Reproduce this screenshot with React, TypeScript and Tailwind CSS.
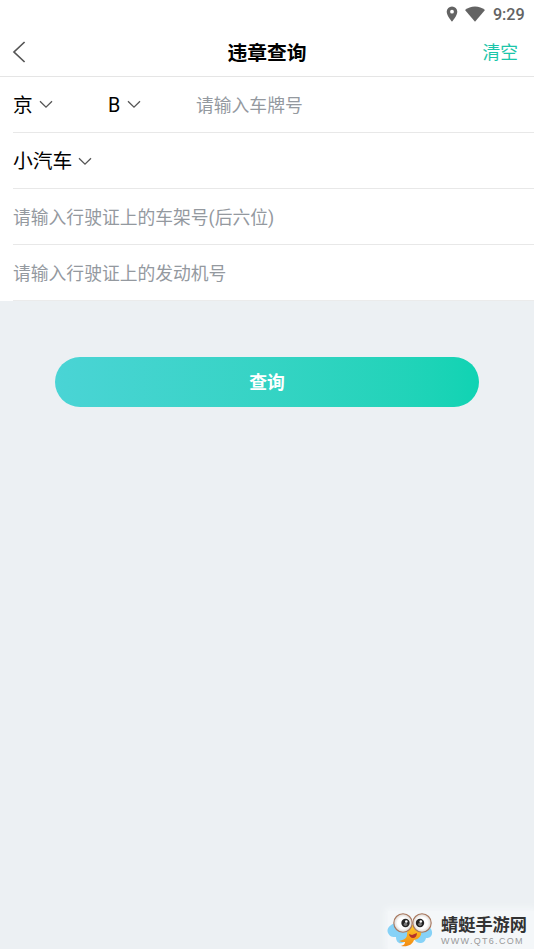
type ArrowProps = { className?: string }

function DownArrow({ className = "" }: ArrowProps) {
  return (
    <svg viewBox="0 0 14 9" className={`mb-0.5 w-3.5 h-[9px] shrink-0 ${className}`} fill="none" stroke="#555" strokeWidth="1.3">
      <path d="M1 1.2 7 7.2 13 1.2" />
    </svg>
  )
}

function StatusBar() {
  return (
    <div className="flex h-7 items-center justify-end pr-[9.5px] text-[#636363]">
      <svg viewBox="0 0 12 16" className="mr-[7px] h-4 w-3" fill="currentColor">
        <path fillRule="evenodd" d="M6 .4A5.3 5.3 0 0 0 .7 5.7C.7 9.7 6 15.6 6 15.6s5.3-5.9 5.3-9.9A5.3 5.3 0 0 0 6 .4Zm0 3.4a1.9 1.9 0 1 1 0 3.8 1.9 1.9 0 0 1 0-3.8Z" />
      </svg>
      <svg viewBox="0 0 20 16" className="mr-2 h-4 w-5" fill="currentColor">
        <path d="M0 4.1C2.8 1.8 6.2.6 10 .6s7.2 1.2 10 3.5L10 15.7Z" />
      </svg>
      <span className="pt-px text-[16.2px] leading-7 font-medium tracking-[-0.1px]">9:29</span>
    </div>
  )
}

function Header() {
  return (
    <div className="grid h-[49px] grid-cols-3 items-center border-b border-[#e5e5e5] px-3">
      <button>
        <svg viewBox="0 0 14 22" className="h-[22px] w-3.5" fill="none" stroke="#555" strokeWidth="1.7">
          <path d="M12.6 1 2 11 12.6 21" />
        </svg>
      </button>
      <h1 className="pt-[3px] text-center text-[19.8px] leading-7 font-bold text-black">违章查询</h1>
      <button className="pt-px pr-1 text-right text-[17.8px] leading-7 text-[#1bc5a9]">清空</button>
    </div>
  )
}

function Watermark() {
  return (
    <div className="absolute right-0 bottom-0 flex h-[38px] w-[146px] items-center bg-[#f4f7f9] shadow-[0_0_6px_3px_#f4f7f9]">
      <svg viewBox="0 0 46 36" className="-ml-px h-9 w-[46px] shrink-0">
        <defs>
          <radialGradient id="eye">
            <stop offset="0.6" stopColor="#fff" />
            <stop offset="1" stopColor="#d9d4cf" />
          </radialGradient>
          <linearGradient id="beak" x2="0" y2="1">
            <stop stopColor="#ffc928" />
            <stop offset="1" stopColor="#f28a12" />
          </linearGradient>
        </defs>
        <g fill="#86d2f7">
          <path d="M9 11C3 12-1 17 1 21s4 4 8 4c0 5 3 7 6 6 4-1 7-5 7-10Z" />
          <path d="M37 12c5 1 9 6 8 10s-4 4-6 4c-1 4-3 5-6 5-4 0-7-4-7-10Z" />
        </g>
        <path d="M21 13h8l5 6c1 5-2 8-7 9-2 5-6 7-13 6 3-1 4-2 4-4-2 0-4 0-6-1 5-1 8-3 8-6Z" fill="url(#beak)" />
        <path d="m22 22 3 1 5-2c0 3-2 5-4 5s-4-2-4-4Z" fill="#b3322a" />
        <circle cx="16" cy="11" r="9.2" fill="url(#eye)" stroke="#a8785f" strokeWidth="1.1" />
        <circle cx="35" cy="11" r="9.2" fill="url(#eye)" stroke="#a8785f" strokeWidth="1.1" />
        <circle cx="18.5" cy="11" r="4.2" fill="#242424" />
        <circle cx="33" cy="11" r="4.2" fill="#242424" />
        <circle cx="18.5" cy="12.2" r="1.8" fill="#777" />
        <circle cx="33" cy="12.2" r="1.8" fill="#777" />
        <circle cx="19.3" cy="9.5" r="1.3" fill="#fff" />
        <circle cx="33.8" cy="9.5" r="1.3" fill="#fff" />
      </svg>
      <div className="ml-2 whitespace-nowrap">
        <div className="pt-px text-[17.2px] leading-[21px] font-bold text-[#333]">蜻蜓手游网</div>
        <div className="font-['Liberation_Sans',sans-serif] text-[9px] leading-[10px] tracking-[1.3px] text-[#999]">WWW.QT6.COM</div>
      </div>
    </div>
  )
}

export default function App() {
  return (
    <div className="relative h-[949px] w-[534px] overflow-hidden bg-[#ecf0f3] font-[Roboto,'Noto_Sans_CJK_SC',sans-serif]">
      <div className="bg-white">
        <StatusBar />
        <Header />
        <div className="pl-[13px] text-[17.8px] text-[#94999f]">
          <div className="flex h-14 items-center border-b border-[#e8e8e8] pt-[3px]">
            <div className="flex w-[95px] items-center text-[19.7px] text-black">
              京
              <DownArrow className="ml-1.5" />
            </div>
            <div className="flex w-[88px] items-center text-[19.7px] text-black">
              B
              <DownArrow className="ml-[7px]" />
            </div>
            <span>请输入车牌号</span>
          </div>
          <div className="flex h-14 items-center border-b border-[#e8e8e8] pt-[3px] text-[19.8px] text-black">
            小汽车
            <DownArrow className="ml-1.5" />
          </div>
          <div className="flex h-14 items-center border-b border-[#e8e8e8] pt-[3px]">请输入行驶证上的车架号(后六位)</div>
          <div className="flex h-14 items-center border-b border-[#ebebeb] pt-[3px]">请输入行驶证上的发动机号</div>
        </div>
      </div>
      <button className="mx-[55px] mt-14 flex h-[50px] w-[424px] items-center justify-center rounded-full bg-linear-to-r from-[#4ad4d5] to-[#10d3b3] pt-0.5 text-[17.8px] font-bold text-white">
        查询
      </button>
      <Watermark />
    </div>
  )
}
